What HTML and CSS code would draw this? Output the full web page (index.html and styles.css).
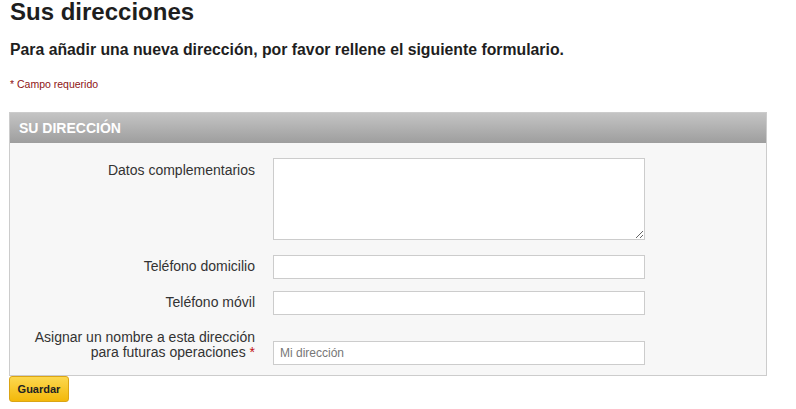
FILE: index.html
```html
<!DOCTYPE html>
<html lang="es">
<head>
<meta charset="utf-8">
<title>Sus direcciones</title>
<link rel="stylesheet" href="styles.css">
</head>
<body>
<h1 class="page-title">Sus direcciones</h1>
<p class="intro">Para añadir una nueva dirección, por favor rellene el siguiente formulario.</p>
<p class="required-note">* Campo requerido</p>
<form class="address-form">
  <section class="panel">
    <h2 class="panel-head">SU DIRECCIÓN</h2>
    <div class="panel-body">
      <div class="row row-first">
        <label class="row-label" for="other">Datos complementarios</label>
        <textarea id="other" class="field field-area"></textarea>
      </div>
      <div class="row row-tel">
        <label class="row-label" for="phone">Teléfono domicilio</label>
        <input id="phone" class="field" type="text">
      </div>
      <div class="row row-mobile">
        <label class="row-label" for="mobile">Teléfono móvil</label>
        <input id="mobile" class="field" type="text">
      </div>
      <div class="row row-alias">
        <label class="row-label label-multi" for="alias">Asignar un nombre a esta dirección<br>para futuras operaciones <span class="req">*</span></label>
        <input id="alias" class="field field-alias" type="text" placeholder="Mi dirección">
      </div>
    </div>
  </section>
  <button type="button" class="btn-save">Guardar</button>
</form>
</body>
</html>
```
FILE: styles.css
```css
html, body {
  margin: 0;
  padding: 0;
  background: #ffffff;
}
body {
  font-family: "Liberation Sans", Arial, sans-serif;
  color: #333333;
}
.page-title {
  margin: 0 0 0 10px;
  font-size: 24px;
  line-height: 24px;
  font-weight: bold;
  color: #1e1e1e;
}
.intro {
  margin: 16px 0 0 10px;
  font-size: 15.8px;
  line-height: 20px;
  font-weight: bold;
  color: #1e1e1e;
}
.required-note {
  margin: 17px 0 0 10px;
  font-size: 10.5px;
  line-height: 14px;
  color: #8e1414;
}
.address-form {
  margin: 21px 0 0 9px;
  width: 758px;
}
.panel {
  border: 1px solid #cccccc;
  background: #f7f7f7;
}
.panel-head {
  margin: 0;
  height: 30px;
  padding: 0 0 0 9px;
  font-size: 14px;
  line-height: 30px;
  font-weight: bold;
  color: #ffffff;
  background: linear-gradient(#c4c4c4, #9e9e9e);
}
.panel-body {
  padding: 15px 0 10px 0;
}
.row {
  display: flex;
  align-items: flex-start;
}
.row-label {
  width: 245px;
  flex: 0 0 245px;
  margin-right: 18px;
  text-align: right;
  font-size: 14px;
  line-height: 15px;
  color: #333333;
}
.row-first .row-label { padding-top: 5px; }
.row-tel { margin-top: 15px; }
.row-tel .row-label,
.row-mobile .row-label { padding-top: 4px; }
.row-mobile { margin-top: 12px; }
.row-alias { margin-top: 15px; }
.req { color: #c01010; }
.field {
  box-sizing: border-box;
  width: 372px;
  height: 24px;
  margin: 0;
  padding: 0 6px;
  border: 1px solid #cccccc;
  background: #ffffff;
  font-family: "Liberation Sans", Arial, sans-serif;
  font-size: 12px;
  color: #333333;
  outline: none;
}
.field-area {
  height: 82px;
  padding: 4px 6px;
  resize: both;
  display: block;
}
.field-alias { margin-top: 11px; }
.field::placeholder { color: #777777; }
.btn-save {
  display: block;
  box-sizing: border-box;
  width: 60px;
  height: 26px;
  margin: 0;
  padding: 0;
  border: 1px solid #dba514;
  border-radius: 3px;
  background: linear-gradient(#fcd84f, #f3b80a);
  font-family: "Liberation Sans", Arial, sans-serif;
  font-size: 11px;
  font-weight: bold;
  color: #222222;
  cursor: pointer;
}
```
